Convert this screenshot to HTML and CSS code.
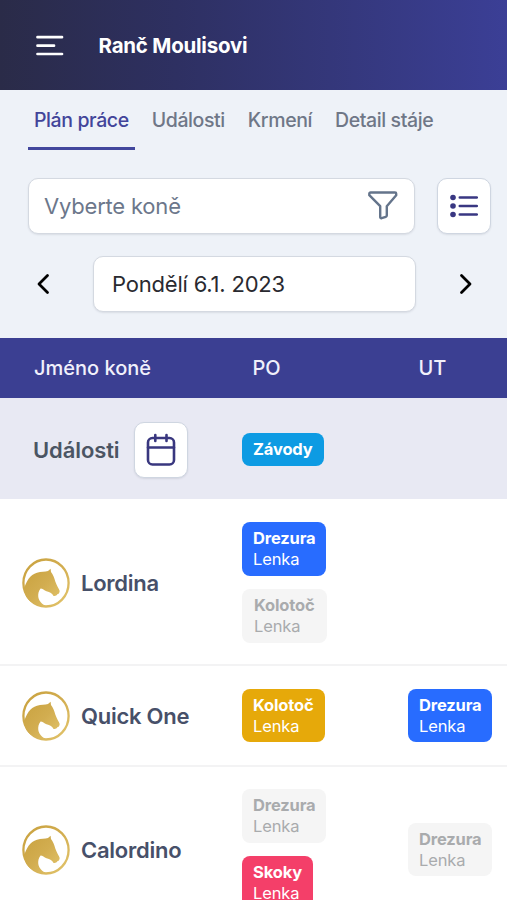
FILE: index.html
```html
<!DOCTYPE html>
<html lang="cs">
<head>
<meta charset="utf-8">
<meta name="viewport" content="width=device-width, initial-scale=1">
<title>Ranč Moulisovi</title>
<link rel="stylesheet" href="styles.css">
</head>
<body>
<svg class="defs" aria-hidden="true">
  <defs>
    <linearGradient id="gold" x1="0" y1="0" x2="1" y2="1">
      <stop offset="0" stop-color="#c9a23f"/>
      <stop offset=".5" stop-color="#d2ad50"/>
      <stop offset="1" stop-color="#e3c56c"/>
    </linearGradient>
    <symbol id="horse" viewBox="0 0 48 50">
      <ellipse cx="24" cy="25" rx="22.600" ry="23.500" fill="none" stroke="url(#gold)" stroke-width="2.300"/>
      <path d="M2 31C4 24 8 16.500 15 14.800C19 13.600 23 13.800 26 13L28.600 10.800L29 14C31 16.500 32.300 19.500 33.300 23.500C34.300 27 37 30.500 37.700 33C37.400 35.300 36.500 36 35.300 36.300C34.700 37.700 33 38.300 31.300 37.800C30.500 35.500 28 34 24.500 33.300C22.300 32.500 20.500 30.500 18.600 30.500C16.500 33 16 36 16.300 39C17 43 20 46.500 25 48.600C12 49 3 42 2 31Z" fill="url(#gold)"/>
    </symbol>
  </defs>
</svg>
<div class="app">
  <header class="topbar">
    <svg class="menu" viewBox="0 0 28 22"><path d="M1.500 2.200h24.500M1.500 10.700h16.500M1.500 19h24.500"/></svg>
    <h1>Ranč Moulisovi</h1>
  </header>
  <nav class="tabs">
    <a class="tab active">Plán práce</a>
    <a class="tab">Události</a>
    <a class="tab">Krmení</a>
    <a class="tab">Detail stáje</a>
  </nav>
  <div class="filters">
    <div class="field search"><span>Vyberte koně</span>
      <svg class="funnel" viewBox="0 0 30 30"><path d="M2.500 1.500h24.500a1.200 1.200 0 0 1 1.200 1.200v1.500L18.800 15.200v9.300a1.400 1.400 0 0 1-1 1.300l-4.200 1.400a1 1 0 0 1-1.400-1V15.200L1.300 4.200V2.700a1.200 1.200 0 0 1 1.200-1.200Z"/></svg>
    </div>
    <div class="square"><svg class="list" viewBox="0 0 28 24"><path d="M9.800 3.500h17M9.800 12h17M9.800 20.500h17"/><circle cx="3" cy="3.500" r="2.800"/><circle cx="3" cy="12" r="2.800"/><circle cx="3" cy="20.500" r="2.800"/></svg></div>
  </div>
  <div class="dates">
    <svg class="chev" viewBox="0 0 14 22"><path d="M11.500 2.500L3 11l8.500 8.500"/></svg>
    <div class="field date"><span>Pondělí 6.1. 2023</span></div>
    <svg class="chev" viewBox="0 0 14 22"><path d="M2.500 2.500L11 11l-8.500 8.500"/></svg>
  </div>
  <main class="table">
    <div class="row head"><div class="name">Jméno koně</div><div class="day">PO</div><div class="day">UT</div></div>
    <div class="row events">
      <div class="name"><span>Události</span><div class="square"><svg class="cal" viewBox="0 0 30 34"><rect x="2" y="5" width="26" height="26.500" rx="4.500"/><path d="M2 14.500h26M9.300 2v6M20.500 2v6"/></svg></div></div>
      <div class="day"><div class="tag sky"><b>Závody</b></div></div><div class="day"></div>
    </div>
    <div class="row tall first">
      <div class="name horse"><svg class="logo"><use href="#horse"/></svg><span>Lordina</span></div>
      <div class="day"><div class="tag blue"><b>Drezura</b><span>Lenka</span></div><div class="tag muted wide"><b>Kolotoč</b><span>Lenka</span></div></div>
      <div class="day"></div>
    </div>
    <div class="row short">
      <div class="name horse"><svg class="logo"><use href="#horse"/></svg><span>Quick One</span></div>
      <div class="day"><div class="tag amber"><b>Kolotoč</b><span>Lenka</span></div></div>
      <div class="day"><div class="tag blue"><b>Drezura</b><span>Lenka</span></div></div>
    </div>
    <div class="row tall">
      <div class="name horse"><svg class="logo"><use href="#horse"/></svg><span>Calordino</span></div>
      <div class="day"><div class="tag muted"><b>Drezura</b><span>Lenka</span></div><div class="tag rose"><b>Skoky</b><span>Lenka</span></div></div>
      <div class="day"><div class="tag muted"><b>Drezura</b><span>Lenka</span></div></div>
    </div>
  </main>
</div>
</body>
</html>
```

FILE: styles.css
```css
* { box-sizing: border-box; }
body { margin: 0; font-family: Inter, "Liberation Sans", sans-serif; background: #eef2f8; }
svg { display: block; flex: none; fill: none; stroke-linecap: round; stroke-linejoin: round; }
.defs { position: absolute; width: 0; height: 0; }
.app { width: 507px; height: 900px; overflow: hidden; }
.topbar { height: 90px; display: flex; align-items: center; padding: 1px 0 0 35.500px; background: linear-gradient(90deg, #2a2b48, #2e3062 35%, #3b3f96); color: #fff; }
.menu { width: 28px; height: 22px; stroke: #fff; stroke-width: 2.700; }
h1 { margin: 0 0 0 35px; font-size: 20.500px; font-weight: 700; line-height: 28px; letter-spacing: -.23px; }
.tabs { height: 60px; display: flex; padding-left: 28px; gap: 11px; }
.tab { height: 60px; line-height: 60px; padding: 0 6px; font-size: 19.500px; font-weight: 500; letter-spacing: -.4px; color: #6f7787; white-space: nowrap; }
.tab.active { color: #42459a; border-bottom: 3px solid #42479d; }
.filters { display: flex; gap: 22px; padding: 28px 0 0 28px; }
.field { height: 56px; display: flex; align-items: center; background: #fff; border: 1px solid #d4d9e1; border-radius: 10px; box-shadow: 0 1px 2px #1e293b1a; font-size: 22px; letter-spacing: -.2px; white-space: nowrap; }
.search { width: 387px; padding: 0 16px 0 15px; justify-content: space-between; color: #6c778b; }
.funnel { width: 30px; height: 30px; stroke: #64748b; stroke-width: 2.400; }
.square { width: 54px; height: 56px; display: flex; align-items: center; justify-content: center; background: #fff; border: 1px solid #cfd6e1; border-radius: 10px; box-shadow: 0 1px 2px #1e293b1a; }
.list { width: 28px; height: 24px; stroke: #393782; stroke-width: 2.600; }
.list circle { fill: #393782; stroke: none; }
.dates { display: flex; align-items: center; padding: 22px 0 26px 36px; }
.date { width: 323px; margin: 0 43px; padding-left: 18px; color: #292a30; }
.chev { width: 14px; height: 22px; stroke: #000; stroke-width: 2.800; }
.row { display: grid; grid-template-columns: 242px 166px 99px; align-items: center; background: #fff; }
.head { height: 60px; background: #3b3f92; color: #f0f0fb; font-size: 20px; font-weight: 500; }
.head .name { padding-left: 34px; }
.head .day { padding-left: 10.500px; }
.events { height: 101px; padding-top: 2px; background: #e8e9f3; }
.events .name { display: flex; align-items: center; gap: 14px; padding-left: 33px; font-size: 22px; font-weight: 600; letter-spacing: -.1px; color: #4b5563; }
.cal { width: 30px; height: 34px; stroke: #39377f; stroke-width: 2.600; }
.horse { display: flex; align-items: center; gap: 11px; padding-left: 22px; font-size: 22px; font-weight: 600; letter-spacing: -.25px; color: #475069; }
.logo { width: 48px; height: 50px; }
.tall { height: 167px; border-bottom: 2px solid #f3f3f4; }
.first { padding-top: 2px; }
.short { height: 101px; border-bottom: 2px solid #f3f3f4; }
.day { display: flex; flex-direction: column; align-items: flex-start; gap: 13.300px; }
.tag { padding: 6px 11px; border-radius: 8px; font-size: 16.500px; line-height: 20.800px; letter-spacing: -.15px; color: #fff; }
.tag b, .tag span { display: block; }
.tag b { font-weight: 700; }
.sky { background: #0d9be3; }
.blue { background: #286cff; }
.amber { background: #e6a90a; }
.rose { background: #f43f69; }
.muted { background: #f5f5f5; color: #a9abad; }
.wide { padding: 6px 12px; }
```
